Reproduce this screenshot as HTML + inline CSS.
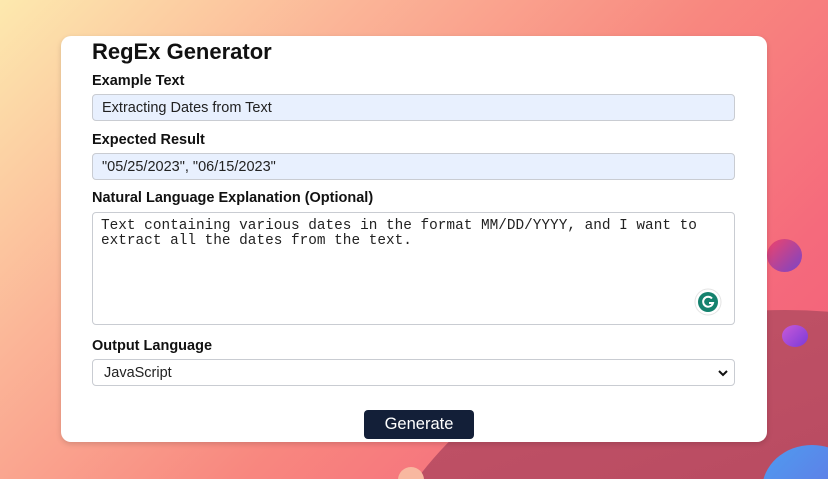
<!DOCTYPE html>
<html><head><style>
*{margin:0;padding:0;box-sizing:border-box}
html,body{width:828px;height:479px;overflow:hidden}
body{position:relative;font-family:"Liberation Sans",Arial,sans-serif;
background:linear-gradient(135deg,#fde9ae 0%,#fbb497 28%,#f8877f 55%,#f56a7c 80%,#f05e78 100%)}
.wrap{position:absolute;left:0;top:0;width:828px;height:479px;overflow:hidden}
.blob{position:absolute;border-radius:50%}
.card{position:absolute;left:61px;top:36px;width:706px;height:406px;background:#fff;border-radius:10px;box-shadow:0 2px 6px rgba(0,0,0,.15)}
h1{position:absolute;left:31px;top:3px;font-size:22px;font-weight:bold;color:#111}
.lbl{position:absolute;left:31px;font-size:14.5px;font-weight:bold;color:#111;line-height:18px}
.in{position:absolute;left:31px;width:643px;height:27px;background:#e8f0fe;border:1px solid #c9ccd2;border-radius:4px;font-size:14.5px;color:#222;padding:5px 9px;line-height:16px}
.ta{position:absolute;left:31px;top:176px;width:643px;height:113px;border:1px solid #c9ccd2;border-radius:4px;font-family:"Liberation Mono",monospace;font-size:14.4px;line-height:14.5px;color:#222;padding:6px 8px;white-space:nowrap;overflow:hidden}
.sel{position:absolute;left:31px;top:323px;width:643px;height:27px;border:1px solid #c9ccd2;border-radius:4px;font-size:14.5px;color:#222;padding:5px 11px;line-height:16px}
.btn{position:absolute;left:303px;top:374px;width:110px;height:29px;background:#131f38;border-radius:4px;color:#fff;font-size:16.5px;text-align:center;line-height:29px}
</style></head><body>
<div class="wrap">
<div class="blob" style="left:355px;top:310px;width:860px;height:700px;background:linear-gradient(160deg,#c25468,#a83a55)"></div>
<div class="blob" style="left:767px;top:239px;width:35px;height:33px;background:linear-gradient(135deg,#f0436a,#7a45c8)"></div>
<div class="blob" style="left:782px;top:325px;width:26px;height:22px;background:linear-gradient(135deg,#c85ad8,#7a3ad8)"></div>
<div class="blob" style="left:762px;top:445px;width:100px;height:90px;background:linear-gradient(135deg,#4e9cf0,#6a6ae0)"></div>
<div class="blob" style="left:398px;top:467px;width:26px;height:26px;background:#f8b8a0"></div>
</div>
<div class="card">
<h1>RegEx Generator</h1>
<div class="lbl" style="top:36px">Example Text</div>
<div class="in" style="top:58px">Extracting Dates from Text</div>
<div class="lbl" style="top:95px">Expected Result</div>
<div class="in" style="top:117px">"05/25/2023", "06/15/2023"</div>
<div class="lbl" style="top:153px">Natural Language Explanation (Optional)</div>
<div class="ta">Text containing various dates in the format MM/DD/YYYY, and I want to<br>extract all the dates from the text.
<svg style="position:absolute;right:12px;bottom:8px" width="28" height="28" viewBox="0 0 28 28"><circle cx="14" cy="14" r="13" fill="#fff" stroke="#e4e4e4"/><circle cx="14" cy="14" r="10" fill="#15826e"/><path d="M18 10.5A5 5 0 1 0 19 15h-4" stroke="#fff" stroke-width="2" fill="none"/></svg>
</div>
<div class="lbl" style="top:301px">Output Language</div>
<div class="sel">JavaScript<svg style="position:absolute;right:6px;top:9px" width="10" height="8" viewBox="0 0 10 8"><path d="M1 2l4 4 4-4" stroke="#111" stroke-width="2" fill="none"/></svg></div>
<div class="btn">Generate</div>
</div>
</body></html>
